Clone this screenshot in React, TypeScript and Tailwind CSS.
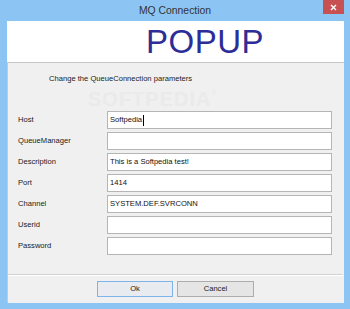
import React from "react";

const fields = [
  { label: "Host", value: "Softpedia", caret: true },
  { label: "QueueManager", value: "" },
  { label: "Description", value: "This is a Softpedia test!" },
  { label: "Port", value: "1414" },
  { label: "Channel", value: "SYSTEM.DEF.SVRCONN" },
  { label: "Userid", value: "" },
  { label: "Password", value: "" },
];

export default function App() {
  return (
    <div
      className="w-[350px] h-[309px] bg-[#8cc4f3] flex flex-col overflow-hidden"
      style={{ fontFamily: '"Liberation Sans", Arial, sans-serif' }}
    >
      {/* Title bar */}
      <div className="relative h-[21px] flex items-center justify-center shrink-0">
        <span className="text-[10.4px] text-[#333] leading-none mt-[1px]">MQ Connection</span>
        <div className="absolute top-0 right-[6px] w-[21px] h-[14px] bg-[#c75050] flex items-center justify-center">
          <svg width="7" height="7" viewBox="0 0 7 7">
            <path d="M1 1L6 6M6 1L1 6" stroke="#fff" strokeWidth="1.4" />
          </svg>
        </div>
      </div>

      <div className="flex flex-col ml-[7px] mr-[6px] mb-[6px] flex-1">
        {/* Banner */}
        <div className="h-[41px] bg-white flex items-center pl-[139px] shrink-0">
          <span className="text-[33px] text-[#2d2d98] leading-none tracking-[0.5px]">POPUP</span>
        </div>

        {/* Panel */}
        <div className="relative flex-1 bg-[#f0f0f0] border-t border-l border-[#c8c8c8] flex flex-col">
          <div className="h-[21px] mt-[5px] pl-[41px] flex items-center text-[7.6px] text-[#222]">
            Change the QueueConnection parameters
          </div>

          {/* faint watermark */}
          <div className="h-[22px] pl-[80px] flex items-start text-[20px] font-bold text-[#eaeaea] tracking-[1px] leading-none select-none">
            SOFTPEDIA<span className="text-[7px] align-top">®</span>
          </div>

          <div className="flex flex-col gap-[3px] pl-[10px]">
            {fields.map((f) => (
              <div key={f.label} className="flex items-center h-[18px]">
                <span className="w-[89px] text-[7.6px] text-[#222]">{f.label}</span>
                <div className="w-[225px] h-[18px] bg-white border border-[#b5b5b5] flex items-center pl-[2px] text-[7.6px] text-[#111]">
                  {f.value}
                  {f.caret && <span className="w-px h-[11px] bg-black ml-[1px]" />}
                </div>
              </div>
            ))}
          </div>

          <div className="mt-[19px] border-t border-[#d2d2d2] border-b border-b-white h-[2px] mr-[1px]" />

          <div className="flex justify-center gap-[4px] mt-[5px] pr-[1px]">
            <button className="w-[76px] h-[16px] border border-[#7eb4ea] bg-[#e8ecf0] text-[7.6px] text-[#222] flex items-center justify-center">
              Ok
            </button>
            <button className="w-[77px] h-[16px] border border-[#adadad] bg-[#e5e5e5] text-[7.6px] text-[#222] flex items-center justify-center">
              Cancel
            </button>
          </div>
        </div>
      </div>
    </div>
  );
}
